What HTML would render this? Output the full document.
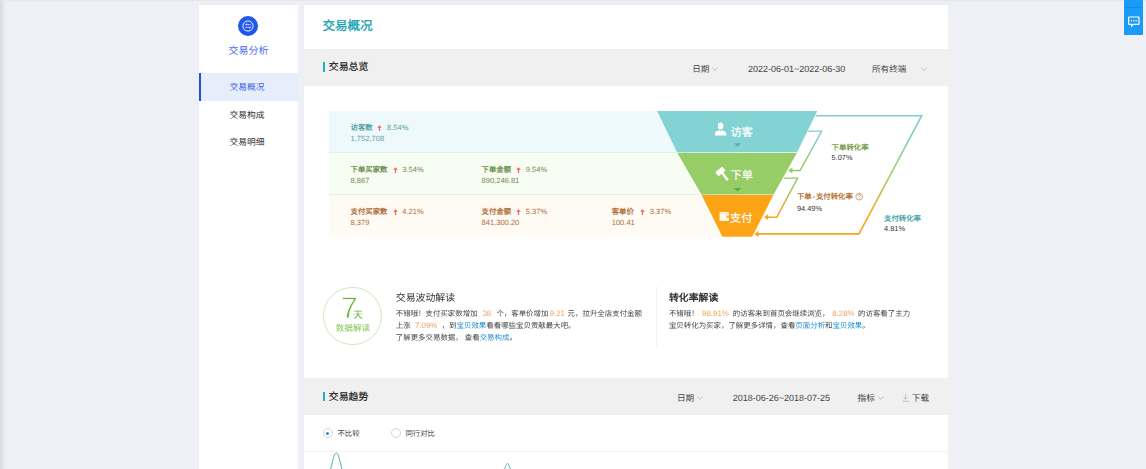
<!DOCTYPE html>
<html lang="zh-CN">
<head>
<meta charset="utf-8">
<title>交易概况</title>
<style>
*{box-sizing:border-box;margin:0;padding:0}
html,body{width:1146px;height:469px;overflow:hidden}
body{text-rendering:geometricPrecision;background:#eff0f5;font-family:"Liberation Sans",sans-serif;color:#333;position:relative;font-size:7.5px;line-height:1}
.abs{position:absolute}
.topedge{left:0;top:0;width:1146px;height:2px;background:linear-gradient(#e3e4e9,#eff0f5)}
.leftedge{left:0;top:0;width:6px;height:469px;background:linear-gradient(90deg,#d9dadf,#eff0f5)}
/* sidebar */
.side{left:199px;top:5px;width:99px;height:464px;background:#fff}
.logo{left:39.4px;top:10.9px;width:19.8px;height:20px;border-radius:50%;background:#1f58ea}
.sidetitle{left:0;top:40.5px;width:99px;text-align:center;font-size:10px;color:#4a6cf0;line-height:12px}
.mi{left:0;width:99px;height:27.7px;line-height:29.4px;padding-right:3px;text-align:center;font-size:8.75px;color:#333}
.mi.on{background:#e6eefc;color:#3a5fe5;border-left:2px solid #1d4fe6;padding-right:5px}
/* main */
.main{left:304px;top:5px;width:643.5px;height:464px;background:#fff}
.ptitle{left:18.5px;top:13.1px;font-size:12.5px;line-height:16px;color:#1aa4b6;white-space:nowrap;-webkit-text-stroke:0.4px #1aa4b6}
.sec{left:0;width:643.5px;background:#f0f0f0}
.sec .bar{left:18.7px;width:2.7px;height:9.6px;background:#22adba}
.sec .t{left:24.8px;font-size:9.9px;line-height:12px;color:#222;-webkit-text-stroke:0.22px #222;white-space:nowrap}
.ctl{font-size:8.6px;line-height:12px;color:#444;white-space:nowrap}
.chev{width:6px;height:4px}
/* funnel rows */
.row{left:25px;width:420px}
.lbl{font-weight:bold;font-size:7.4px;line-height:10px;white-space:nowrap}
.pct{font-size:7.55px;line-height:10px;white-space:nowrap}
.val{font-size:7.55px;line-height:10px;white-space:nowrap}
.up{width:5px;height:6px}
.c1{color:#5a9fa3}.c2{color:#6f8f4f}.c3{color:#b06f3a}
.flabel{font-weight:bold;font-size:7.4px;line-height:10px;white-space:nowrap}
.fval{font-size:7.4px;line-height:10px;color:#333;white-space:nowrap}
/* insight */
.h3{font-size:9.9px;line-height:12px;color:#333;white-space:nowrap}
.para{font-size:7.45px;line-height:12px;color:#444;white-space:nowrap}
.para b{font-weight:normal;color:#f5a15a;padding:0 4.3px;font-size:7.9px}
.para a{color:#1e8fd6;text-decoration:none}
.radio{width:10px;height:10px;border-radius:50%;border:1px solid #d4d4d4;background:#fff}
.rl{font-size:7.4px;line-height:10px;color:#444;white-space:nowrap}
</style>
</head>
<body>
<div class="abs topedge"></div>
<div class="abs leftedge"></div>

<!-- SIDEBAR -->
<div class="abs side">
  <div class="abs logo">
    <svg class="abs" style="left:0;top:0" width="20" height="20" viewBox="0 0 20 20">
      <circle cx="10" cy="10" r="5.1" fill="none" stroke="#fff" stroke-width="0.95" opacity=".95"/>
      <path d="M7.8 8.6h4.6M8.9 7.6l-1.1 1M12.4 11.3H7.8M11.3 12.3l1.1-1" fill="none" stroke="#fff" stroke-width="0.8" stroke-linecap="round" opacity=".85"/>
    </svg>
  </div>
  <div class="abs sidetitle">交易分析</div>
  <div class="abs mi on" style="top:68.3px;height:27.4px">交易概况</div>
  <div class="abs mi" style="top:95.8px">交易构成</div>
  <div class="abs mi" style="top:123.2px">交易明细</div>
</div>

<!-- MAIN -->
<div class="abs main">
  <div class="abs ptitle">交易概况</div>

  <!-- section header 1 -->
  <div class="abs sec" style="top:44px;height:36.6px">
    <div class="abs bar" style="top:13px"></div>
    <div class="abs t" style="top:12.5px">交易总览</div>
    <div class="abs ctl" style="left:388.2px;top:13.8px">日期</div>
    <svg class="abs chev" style="left:408px;top:18px" viewBox="0 0 6 4"><path d="M0.2 0.4L3 3.4L5.8 0.4" fill="none" stroke="#b5b5b5" stroke-width="0.8"/></svg>
    <div class="abs ctl" style="left:444px;top:13.5px;font-size:9px">2022-06-01~2022-06-30</div>
    <div class="abs ctl" style="left:568px;top:13.8px">所有终端</div>
    <svg class="abs chev" style="left:616.5px;top:17.6px" viewBox="0 0 6 4"><path d="M0.2 0.4L3 3.4L5.8 0.4" fill="none" stroke="#b5b5b5" stroke-width="0.8"/></svg>
  </div>

  <!-- funnel -->
  <!-- funnel rows (page coords minus main offset 304,5) -->
  <div class="abs" style="left:25px;top:106px;width:408px;height:41.5px;background:#eef9fb"></div>
  <div class="abs" style="left:25px;top:147.5px;width:408px;height:42px;background:#f7fdf2"></div>
  <div class="abs" style="left:25px;top:189.5px;width:408px;height:42.2px;background:#fefaf4"></div>
  <div class="abs" style="left:25px;top:147px;width:360px;height:1px;background:#e3eeef"></div>
  <div class="abs" style="left:25px;top:189px;width:380px;height:1px;background:#e9eee3"></div>

  <!-- row 1 -->
  <div class="abs lbl c1" style="left:46.5px;top:117.5px">访客数</div>
  <svg class="abs up" style="left:73px;top:119.5px" viewBox="0 0 5 6"><path d="M2.5 0.2L4.8 2.8H3.1V6H1.9V2.8H0.2z" fill="#f5605a"/></svg>
  <div class="abs pct c1" style="left:83px;top:117.5px">8.54%</div>
  <div class="abs val c1" style="left:46.5px;top:128.5px">1,752,708</div>
  <!-- row 2 -->
  <div class="abs lbl c2" style="left:46.5px;top:159.5px">下单买家数</div>
  <svg class="abs up" style="left:88.5px;top:161.5px" viewBox="0 0 5 6"><path d="M2.5 0.2L4.8 2.8H3.1V6H1.9V2.8H0.2z" fill="#f5605a"/></svg>
  <div class="abs pct c2" style="left:98.3px;top:159.5px">3.54%</div>
  <div class="abs val c2" style="left:46.5px;top:170.5px">8,867</div>
  <div class="abs lbl c2" style="left:177.5px;top:159.5px">下单金额</div>
  <svg class="abs up" style="left:211.5px;top:161.5px" viewBox="0 0 5 6"><path d="M2.5 0.2L4.8 2.8H3.1V6H1.9V2.8H0.2z" fill="#f5605a"/></svg>
  <div class="abs pct c2" style="left:221.8px;top:159.5px">9.54%</div>
  <div class="abs val c2" style="left:177.5px;top:170.5px">890,246.81</div>
  <!-- row 3 -->
  <div class="abs lbl c3" style="left:46.5px;top:201.5px">支付买家数</div>
  <svg class="abs up" style="left:88.5px;top:203.5px" viewBox="0 0 5 6"><path d="M2.5 0.2L4.8 2.8H3.1V6H1.9V2.8H0.2z" fill="#f5605a"/></svg>
  <div class="abs pct c3" style="left:98.3px;top:201.5px">4.21%</div>
  <div class="abs val c3" style="left:46.5px;top:212.5px">8,379</div>
  <div class="abs lbl c3" style="left:177.5px;top:201.5px">支付金额</div>
  <svg class="abs up" style="left:211.5px;top:203.5px" viewBox="0 0 5 6"><path d="M2.5 0.2L4.8 2.8H3.1V6H1.9V2.8H0.2z" fill="#f5605a"/></svg>
  <div class="abs pct c3" style="left:221.8px;top:201.5px">5.37%</div>
  <div class="abs val c3" style="left:177.5px;top:212.5px">841,300.20</div>
  <div class="abs lbl c3" style="left:307.7px;top:201.5px">客单价</div>
  <svg class="abs up" style="left:335.5px;top:203.5px" viewBox="0 0 5 6"><path d="M2.5 0.2L4.8 2.8H3.1V6H1.9V2.8H0.2z" fill="#f5605a"/></svg>
  <div class="abs pct c3" style="left:345.7px;top:201.5px">3.37%</div>
  <div class="abs val c3" style="left:307.7px;top:212.5px">100.41</div>

  <!-- funnel shapes + connector lines, drawn in page coordinates -->
  <svg class="abs" style="left:0;top:0" width="643.5" height="464" viewBox="304 5 643.5 464">
    <defs>
      <linearGradient id="g0" gradientUnits="userSpaceOnUse" x1="0" y1="115" x2="0" y2="234">
        <stop offset="0" stop-color="#7fcfd2"/><stop offset=".12" stop-color="#7fcfd2"/><stop offset=".45" stop-color="#9ad27a"/><stop offset=".8" stop-color="#f7a928"/><stop offset="1" stop-color="#f9a21a"/>
      </linearGradient>
      <linearGradient id="g1" gradientUnits="userSpaceOnUse" x1="0" y1="131" x2="0" y2="171">
        <stop offset="0" stop-color="#7fcfd2"/><stop offset=".15" stop-color="#7fcfd2"/><stop offset=".75" stop-color="#8fcb62"/><stop offset="1" stop-color="#8fcb62"/>
      </linearGradient>
      <linearGradient id="g2" gradientUnits="userSpaceOnUse" x1="0" y1="178" x2="0" y2="218">
        <stop offset="0" stop-color="#8fcb62"/><stop offset=".2" stop-color="#8fcb62"/><stop offset=".75" stop-color="#f6a62a"/><stop offset="1" stop-color="#f9a21a"/>
      </linearGradient>
    </defs>
    <path d="M656.3 111L722 237" stroke="#fff" stroke-width="1.4" fill="none" opacity=".9"/>
    <polygon points="657,111 817.3,111 797.2,152.2 677,152.2" fill="#84d3d4"/>
    <polygon points="677.4,153 796.8,153 773.6,194.4 701.4,194.4" fill="#96cd66"/>
    <polygon points="701.6,195.1 773.4,195.1 752.2,236.7 722.4,236.7" fill="#fda416"/>
    <!-- small down triangles -->
    <polygon points="734,143.2 741.2,143.2 737.6,146.8" fill="#62a9bd"/>
    <polygon points="734,188 741.2,188 737.6,191.6" fill="#4fae3a"/>
    <!-- connectors -->
    <path d="M815.6 115.7H921.7L859 233.9H757" fill="none" stroke="url(#g0)" stroke-width="1.6" stroke-linejoin="miter"/>
    <path d="M754.2 234l4.2-2.9v5.8z" fill="#f9a21a"/>
    <path d="M808 131.1H821.7L800.1 170.5H791" fill="none" stroke="url(#g1)" stroke-width="1.4"/>
    <path d="M788.2 170.5l4.2-2.9v5.8z" fill="#8fcb62"/>
    <path d="M784.1 178.1H797.6L776.8 217.2H767" fill="none" stroke="url(#g2)" stroke-width="1.4"/>
    <path d="M764 217.2l4.2-2.9v5.8z" fill="#f9a21a"/>
    <!-- person icon -->
    <g fill="#fff">
      <ellipse cx="720.6" cy="126" rx="2.7" ry="3.5"/>
      <path d="M714.9 135.5v-1.9c0-1.9 1.7-2.6 3.5-3.2l.9-.5 1.3 1.6 1.3-1.6.9.5c1.800.6 3.500 1.300 3.500 3.200v1.900z"/>
    </g>
    <!-- gavel icon -->
    <g fill="#fff">
      <rect x="-4.6" y="-2.6" width="9.2" height="5.2" rx=".8" transform="translate(720.4 171.4) rotate(-38)"/>
      <rect x="-1.2" y="0" width="2.4" height="9.6" rx=".9" transform="translate(722.1 172.8) rotate(-38)"/>
    </g>
    <!-- wallet icon -->
    <g>
      <rect x="719.5" y="212" width="9.4" height="9.1" rx=".9" fill="#fff6e6"/>
      <rect x="726.6" y="215.7" width="2.3" height="2" fill="#fda416"/>
      <rect x="719.5" y="213.5" width="8.4" height=".5" fill="#fda416" opacity=".45"/>
    </g>
    <!-- help icon -->
    <circle cx="859.2" cy="196.6" r="3.4" fill="none" stroke="#b87333" stroke-width=".6"/>
    <path d="M858 195.7c0-.9.5-1.400 1.200-1.400s1.200.5 1.200 1.100c0 .9-1.200.9-1.200 1.900" fill="none" stroke="#b87333" stroke-width=".6"/>
    <circle cx="859.2" cy="198.5" r=".4" fill="#b87333"/>
  </svg>
  <div class="abs" style="left:426.6px;top:120.8px;font-size:11.2px;line-height:14px;color:#fff;white-space:nowrap;-webkit-text-stroke:0.2px #fff">访客</div>
  <div class="abs" style="left:426.6px;top:163.6px;font-size:11.2px;line-height:14px;color:#fff;white-space:nowrap;-webkit-text-stroke:0.2px #fff">下单</div>
  <div class="abs" style="left:426px;top:206.9px;font-size:11.2px;line-height:14px;color:#fff;white-space:nowrap;-webkit-text-stroke:0.2px #fff">支付</div>

  <div class="abs flabel" style="left:527.6px;top:137.5px;color:#7c9a48">下单转化率</div>
  <div class="abs fval" style="left:527.6px;top:147.5px">5.07%</div>
  <div class="abs flabel" style="left:492.9px;top:187px;color:#b47234">下单<span style="padding:0 .9px">-</span>支付转化率</div>
  <div class="abs fval" style="left:492.9px;top:198.6px">94.49%</div>
  <div class="abs flabel" style="left:580px;top:208.5px;color:#4aa5aa">支付转化率</div>
  <div class="abs fval" style="left:580px;top:219.2px">4.81%</div>
  <!-- /funnel -->

  <!-- insight -->
  <!-- 7-day circle -->
  <div class="abs" style="left:19.4px;top:281.9px;width:58.4px;height:58.4px;border-radius:50%;border:1px solid #cfe9bf;background:#fff"></div>
  <div class="abs" style="left:36.8px;top:289.2px;font-size:30px;line-height:30px;color:#6cb53d;white-space:nowrap;-webkit-text-stroke:0.7px #fff;will-change:transform">7</div>
  <div class="abs" style="left:49.2px;top:305.3px;font-size:9.6px;line-height:12px;color:#6cb53d;white-space:nowrap">天</div>
  <div class="abs" style="left:31.7px;top:317px;font-size:8.6px;line-height:12px;color:#8cc75c;white-space:nowrap">数据解读</div>

  <div class="abs h3" style="left:91.8px;top:287.9px">交易波动解读</div>
  <div class="abs para" style="left:91.8px;top:303px">不错哦！支付买家数增加<b style="padding:0 5.2px 0 4.8px">38</b>个，客单价增加<b style="padding:0 2.6px 0 1.2px">9.21</b>元，拉升全店支付金额</div>
  <div class="abs para" style="left:91.8px;top:315px">上涨<b>7.09%</b>，到<a>宝贝效果</a>看看哪些宝贝贡献最大吧。</div>
  <div class="abs para" style="left:91.8px;top:327px">了解更多交易数据， 查看<a>交易构成</a>。</div>

  <div class="abs" style="left:352.4px;top:281px;width:1px;height:61px;background:#f4f4f4"></div>

  <div class="abs h3" style="left:364.9px;top:287.9px;font-weight:bold">转化率解读</div>
  <div class="abs para" style="left:364.9px;top:303px">不错哦！<b style="padding:0 4px 0 3.4px">98.91%</b>的访客来到首页会继续浏览，<b style="padding:0 3.5px 0 2.7px">8.28%</b>的访客看了主力</div>
  <div class="abs para" style="left:364.9px;top:314.5px">宝贝转化为买家，了解更多详情，查看<a>页面分析</a>和<a>宝贝效果</a>。</div>
  <!-- /insight -->

  <!-- trend -->
  <div class="abs sec" style="top:373.4px;height:36.3px">
    <div class="abs bar" style="top:13.2px"></div>
    <div class="abs t" style="top:13.3px">交易趋势</div>
    <div class="abs ctl" style="left:373px;top:13.4px">日期</div>
    <svg class="abs chev" style="left:393px;top:18px" viewBox="0 0 6 4"><path d="M0.2 0.4L3 3.4L5.8 0.4" fill="none" stroke="#b5b5b5" stroke-width="0.8"/></svg>
    <div class="abs ctl" style="left:428.8px;top:13.4px;font-size:9px">2018-06-26~2018-07-25</div>
    <div class="abs ctl" style="left:553.6px;top:13.4px">指标</div>
    <svg class="abs chev" style="left:574px;top:18px" viewBox="0 0 6 4"><path d="M0.2 0.4L3 3.4L5.8 0.4" fill="none" stroke="#b5b5b5" stroke-width="0.8"/></svg>
    <svg class="abs" style="left:598px;top:15.6px" width="7" height="8" viewBox="0 0 7 8"><path d="M3.5 0.3V5M1.5 3.2L3.5 5.2L5.5 3.2M0.3 7.2H6.7" fill="none" stroke="#aaa" stroke-width=".7"/></svg>
    <div class="abs ctl" style="left:607.8px;top:13.4px">下载</div>
  </div>
  <div class="abs radio" style="left:18.7px;top:423px"></div>
  <div class="abs" style="left:22.2px;top:426.5px;width:3px;height:3px;border-radius:50%;background:#1e8fe6"></div>
  <div class="abs rl" style="left:33.4px;top:424.3px">不比较</div>
  <div class="abs radio" style="left:86.5px;top:423px"></div>
  <div class="abs rl" style="left:101.4px;top:424.3px">同行对比</div>
  <div class="abs" style="left:0;top:445.8px;width:643.5px;height:1px;background:#f2f2f2"></div>
  <svg class="abs" style="left:0;top:440px" width="643.5" height="24" viewBox="304 445 643.5 24">
    <path d="M330.4 470C332.6 462 334 452.9 336.3 452.9S340 462 342.2 470" fill="none" stroke="#4fb3b3" stroke-width="1"/>
    <path d="M503.8 470C505.6 467 506.4 463.4 507.5 463.4S509.400 467 511.200 470" fill="none" stroke="#4fb3b3" stroke-width="1"/>
  </svg>
  <!-- /trend -->
</div>

<!-- floating button -->
<div class="abs" style="left:1124.3px;top:0;width:18.8px;height:34.8px;background:#1a9bf8;box-shadow:0 0 1.5px rgba(255,255,255,.9)">
  <div class="abs" style="left:0;top:7px;width:18.5px;height:1px;background:#168be0"></div>
  <svg class="abs" style="left:3.5px;top:15.5px" width="12" height="12" viewBox="0 0 12 12">
    <path d="M1.2 1h9.2a.6.6 0 0 1 .6.6v6.2a.6.6 0 0 1-.6.6H5.2L3.6 10.2V8.4H1.2a.6.6 0 0 1-.6-.6V1.6a.6.6 0 0 1 .6-.6z" fill="none" stroke="#fff" stroke-width="1.2"/>
    <circle cx="3.4" cy="4.700" r=".8" fill="#fff"/><circle cx="5.8" cy="4.700" r=".8" fill="#fff"/><circle cx="8.2" cy="4.700" r=".8" fill="#fff"/>
  </svg>
</div>
</body>
</html>
